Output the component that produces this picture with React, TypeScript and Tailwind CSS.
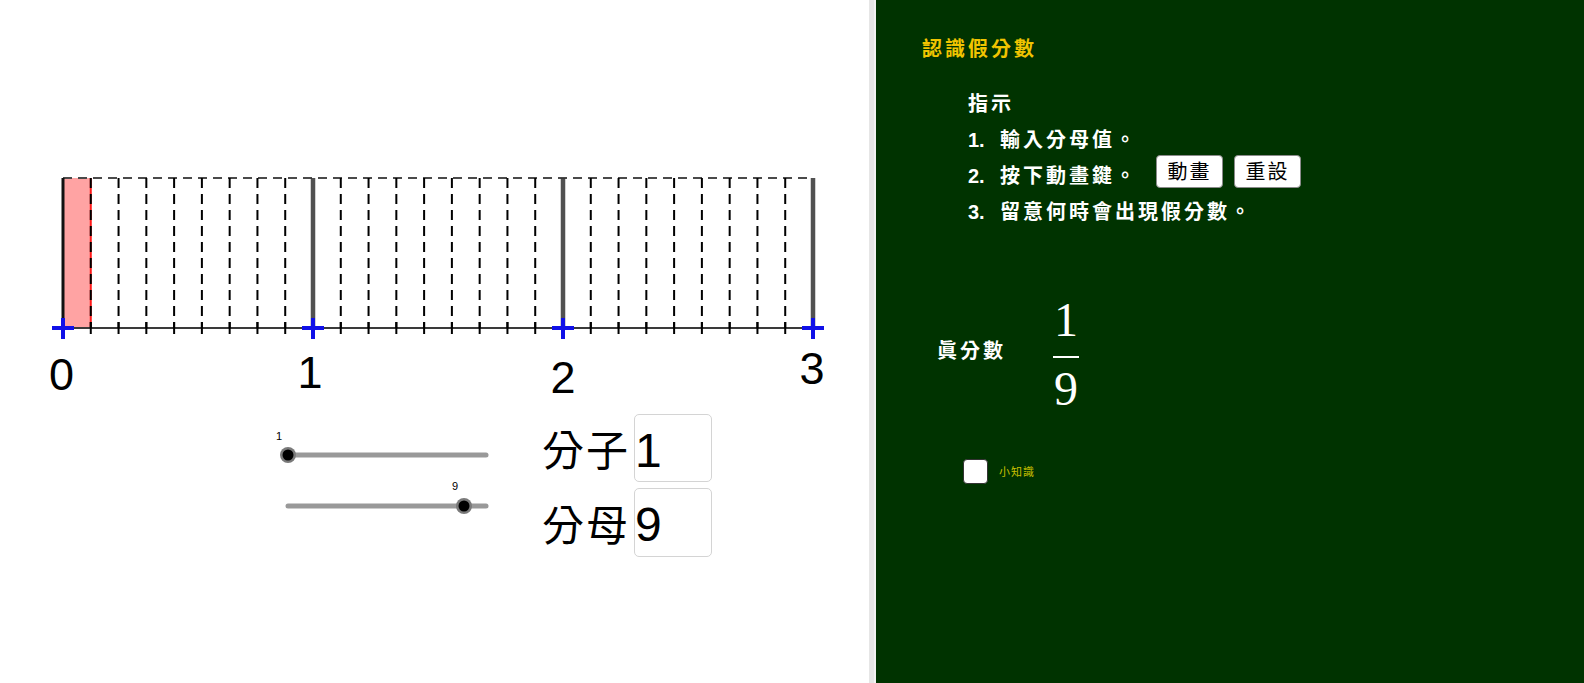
import React from "react";

const X0 = 63;
const U = 250;
const SUB = U / 9;
const TOP = 8;
const BASE = 158;

function NumberLine() {
  const subs = Array.from({ length: 28 }, (_, i) => X0 + i * SUB);
  const labels = [
    { t: "0", x: 61.5, y: 220 },
    { t: "1", x: 310, y: 218 },
    { t: "2", x: 563, y: 223 },
    { t: "3", x: 812, y: 214 },
  ];
  return (
    <svg width={869} height={240} className="block">
      <rect x={X0} y={TOP} width={SUB} height={BASE - TOP} fill="#ffa3a3" />
      <line x1={X0 + SUB} y1={TOP} x2={X0 + SUB} y2={BASE} stroke="#ff1a1a" strokeWidth={2} />
      <line x1={X0} y1={TOP} x2={X0 + 3 * U} y2={TOP} stroke="#4a4a4a" strokeWidth={2} strokeDasharray="9 6" />
      <line x1={X0} y1={BASE} x2={X0 + 3 * U} y2={BASE} stroke="#3a3a3a" strokeWidth={2} />
      {subs.map((x, i) => {
        if (i === 0)
          return <line key={i} x1={x} y1={TOP} x2={x} y2={BASE} stroke="#111" strokeWidth={3} />;
        if (i % 9 === 0)
          return <line key={i} x1={x} y1={TOP} x2={x} y2={BASE} stroke="#333" strokeOpacity={0.85} strokeWidth={4.5} />;
        return <line key={i} x1={x} y1={TOP} x2={x} y2={BASE} stroke="#000" strokeWidth={2} strokeDasharray="10 6" />;
      })}
      {subs.map((x, i) =>
        i % 9 === 0 ? null : (
          <line key={"t" + i} x1={x} y1={BASE - 6} x2={x} y2={BASE + 6} stroke="#000" strokeWidth={2} />
        )
      )}
      {[0, 1, 2, 3].map((k) => {
        const x = X0 + k * U;
        return (
          <g key={"c" + k} stroke="#1010e8" strokeWidth={4}>
            <line x1={x - 11} y1={BASE} x2={x + 11} y2={BASE} />
            <line x1={x} y1={BASE - 10} x2={x} y2={BASE + 11} />
          </g>
        );
      })}
      {labels.map((l) => (
        <text
          key={l.t}
          x={l.x}
          y={l.y}
          textAnchor="middle"
          fontSize={45}
          fontFamily="'Liberation Sans', Arial, sans-serif"
          fill="#000"
        >
          {l.t}
        </text>
      ))}
    </svg>
  );
}

function Sliders() {
  const start = 18;
  const end = 216;
  const pos = (v: number) => start + ((v - 1) / 9) * (end - start);
  const rows = [
    { v: 1, y: 41, ly: 26 },
    { v: 9, y: 92, ly: 76 },
  ];
  return (
    <svg width={230} height={110} className="block shrink-0">
      {rows.map((r) => (
        <g key={r.v}>
          <line x1={start} y1={r.y} x2={end} y2={r.y} stroke="#999" strokeWidth={5} strokeLinecap="round" />
          <circle cx={pos(r.v)} cy={r.y} r={8} fill="#7a7a7a" />
          <circle cx={pos(r.v)} cy={r.y} r={5.5} fill="#000" />
          <text
            x={pos(r.v) - 9}
            y={r.ly}
            textAnchor="middle"
            fontSize={11}
            fontFamily="'Liberation Sans', Arial, sans-serif"
            fill="#000"
          >
            {r.v}
          </text>
        </g>
      ))}
    </svg>
  );
}

const cjkSerif = "font-['Noto_Sans_CJK_TC','Noto_Sans_CJK_SC',sans-serif]";

function ValueRow({ label, value, h }: { label: string; value: string; h: string }) {
  return (
    <div className="flex items-center">
      <span className={`w-[92px] text-[42px] leading-none text-black ${cjkSerif} tracking-[2px]`}>{label}</span>
      <div
        className={`w-[78px] ${h} border border-[#d4d4d4] rounded-[5px] bg-white flex items-center pt-[5px] text-[48px] leading-none font-['Liberation_Sans',Arial,sans-serif] text-black`}
      >
        {value}
      </div>
    </div>
  );
}

function LeftPanel() {
  return (
    <div className="w-[869px] h-full bg-white flex flex-col pt-[170px]">
      <NumberLine />
      <div className="flex mt-[4px] pl-[270px]">
        <Sliders />
        <div className="ml-[42px] flex flex-col gap-[6px]">
          <ValueRow label="分子" value="1" h="h-[68px]" />
          <ValueRow label="分母" value="9" h="h-[69px]" />
        </div>
      </div>
    </div>
  );
}

const cjkBold = "font-['Liberation_Sans','Noto_Sans_CJK_TC',sans-serif] font-bold";

function Step({ n, text, children }: { n: string; text: string; children?: React.ReactNode }) {
  return (
    <div className="h-[36px] flex items-center text-white text-[20px] leading-[28px]">
      <span className={`w-[32px] ${cjkBold}`}>{n}</span>
      <span className={`${cjkBold} tracking-[3px]`}>{text}</span>
      {children}
    </div>
  );
}

function Btn({ children }: { children: React.ReactNode }) {
  return (
    <div className="w-[67px] h-[33px] bg-white border border-[#8a8a8a] rounded-[4px] flex items-center justify-center text-[20px] leading-none text-black tracking-[2px] font-['Noto_Sans_CJK_TC',sans-serif]">
      {children}
    </div>
  );
}

function RightPanel() {
  return (
    <div className="flex-1 h-full bg-[#003300] flex flex-col pt-[35px]">
      <div className={`pl-[46px] text-[20px] leading-[28px] text-[#f0c400] tracking-[3px] ${cjkBold}`}>認識假分數</div>
      <div className="pl-[92px] mt-[23px] flex flex-col">
        <div className={`h-[36px] flex items-center text-white text-[20px] leading-[28px] tracking-[3px] ${cjkBold}`}>指示</div>
        <Step n="1." text="輸入分母值。" />
        <Step n="2." text="按下動畫鍵。">
          <div className="ml-[18px] mb-[10px] flex gap-[11px]">
            <Btn>動畫</Btn>
            <Btn>重設</Btn>
          </div>
        </Step>
        <Step n="3." text="留意何時會出現假分數。" />
      </div>
      <div className="mt-[66px] pl-[61px] flex items-start">
        <div className={`w-[114px] mt-[41px] text-[20px] leading-[28px] text-white tracking-[3px] ${cjkBold}`}>眞分數</div>
        <div className="w-[30px] flex flex-col items-center text-white font-['Liberation_Serif','Times_New_Roman',serif] text-[48px] leading-none">
          <div className="h-[48px]">1</div>
          <div className="mt-[12px] w-[26px] h-[2px] bg-white" />
          <div className="mt-[7px] h-[48px]">9</div>
        </div>
      </div>
      <div className="mt-[46px] pl-[87px] flex items-center">
        <div className="w-[25px] h-[25px] bg-white border border-[#333] rounded-[4px]" />
        <span className="ml-[11px] text-[11px] leading-none text-[#c8c000] font-['Noto_Sans_CJK_TC',sans-serif] tracking-[1px]">小知識</span>
      </div>
    </div>
  );
}

export default function App() {
  return (
    <div className="w-[1584px] h-[683px] flex overflow-hidden bg-white">
      <LeftPanel />
      <div className="w-[7px] h-full bg-[#e6e6e6] border-r-2 border-[#f3f3f3]" />
      <RightPanel />
    </div>
  );
}
